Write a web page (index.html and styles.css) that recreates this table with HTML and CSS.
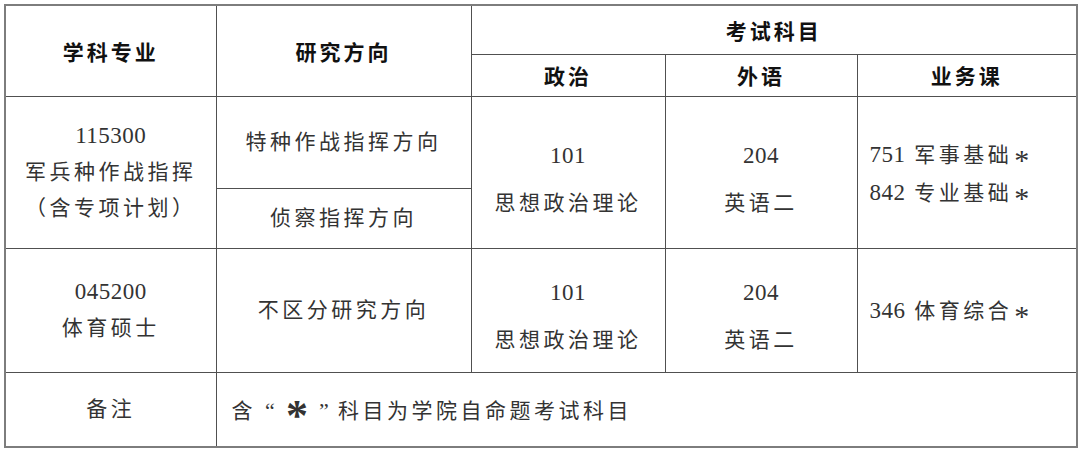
FILE: index.html
```html
<!DOCTYPE html>
<html lang="zh-CN">
<head>
<meta charset="utf-8">
<link rel="stylesheet" href="styles.css">
</head>
<body>
<div class="wrap">
<table class="exam">
  <colgroup>
    <col class="c1"><col class="c2"><col class="c3"><col class="c4"><col class="c5">
  </colgroup>
  <tr class="r-h1">
    <th rowspan="2">学科专业</th>
    <th rowspan="2">研究方向</th>
    <th colspan="3">考试科目</th>
  </tr>
  <tr class="r-h2">
    <th>政治</th>
    <th>外语</th>
    <th>业务课</th>
  </tr>
  <tr class="r-1a">
    <td rowspan="2" class="multi"><span class="num">115300</span><br>军兵种作战指挥<br>（含专项计划）</td>
    <td>特种作战指挥方向</td>
    <td rowspan="2" class="wide"><span class="num">101</span><br>思想政治理论</td>
    <td rowspan="2" class="wide"><span class="num">204</span><br>英语二</td>
    <td rowspan="2" class="left list"><span class="num">751</span> 军事基础<span class="star">*</span><br><span class="num">842</span> 专业基础<span class="star">*</span></td>
  </tr>
  <tr class="r-1b">
    <td>侦察指挥方向</td>
  </tr>
  <tr class="r-2">
    <td class="multi"><span class="num">045200</span><br>体育硕士</td>
    <td>不区分研究方向</td>
    <td class="wide wide2"><span class="num">101</span><br>思想政治理论</td>
    <td class="wide wide2"><span class="num">204</span><br>英语二</td>
    <td class="left single"><span class="num">346</span> 体育综合<span class="star">*</span></td>
  </tr>
  <tr class="r-note">
    <td>备注</td>
    <td colspan="4" class="left note">含<span class="q">“</span><span class="bigstar">*</span><span class="q">”</span>科目为学院自命题考试科目</td>
  </tr>
</table>
</div>
</body>
</html>
```
FILE: styles.css
```css
html, body {
  margin: 0;
  padding: 0;
  background: #ffffff;
}
.wrap {
  padding: 4px 0 0 4px;
}
.exam {
  border-collapse: collapse;
  table-layout: fixed;
  width: 1072px;
  font-family: "Liberation Serif", "Noto Sans CJK SC", serif;
  color: #333333;
  border: 2px solid #7d7d7d;
}
.c1 { width: 211px; }
.c2 { width: 255px; }
.c3 { width: 194px; }
.c4 { width: 192px; }
.c5 { width: 220px; }
.exam th, .exam td {
  border: 1px solid #505050;
  padding: 0;
  text-align: center;
  vertical-align: middle;
}
.exam th {
  font-family: "Noto Sans CJK SC", sans-serif;
  font-weight: 700;
  font-size: 21px;
  letter-spacing: 3px;
  color: #111;
  line-height: 26px;
}
.exam td {
  font-size: 21px;
  letter-spacing: 3.5px;
  line-height: 36px;
  font-weight: 400;
}
.r-h1 { height: 49px; }
.r-h2 { height: 42px; }
.r-1a { height: 92px; }
.r-1b { height: 60px; }
.r-2 { height: 124px; }
.r-note { height: 75px; }
.num {
  font-size: 23px;
  letter-spacing: 0.5px;
}
.exam td.wide {
  line-height: 47px;
  padding-top: 14px;
}
.exam td.wide2 {
  padding-top: 12px;
}
.exam td.left {
  text-align: left;
  padding-left: 12px;
}
.exam td.list {
  line-height: 37px;
  padding-top: 4px;
}
.exam td.single {
  padding-top: 2px;
}
.exam td.note {
  padding-left: 15px;
  padding-top: 4px;
}
.star {
  font-family: "Liberation Serif", serif;
  font-size: 30px;
  letter-spacing: 0;
  display: inline-block;
  line-height: 10px;
  position: relative;
  top: 8px;
  margin-left: 2px;
}
.q {
  font-family: "Liberation Serif", serif;
  font-size: 22px;
  letter-spacing: 0;
  display: inline-block;
  width: 28px;
  text-align: center;
}
.bigstar {
  font-family: "Liberation Serif", serif;
  font-size: 44px;
  font-weight: 700;
  letter-spacing: 0;
  display: inline-block;
  line-height: 10px;
  width: 26px;
  text-align: center;
  position: relative;
  top: 12px;
}
```
